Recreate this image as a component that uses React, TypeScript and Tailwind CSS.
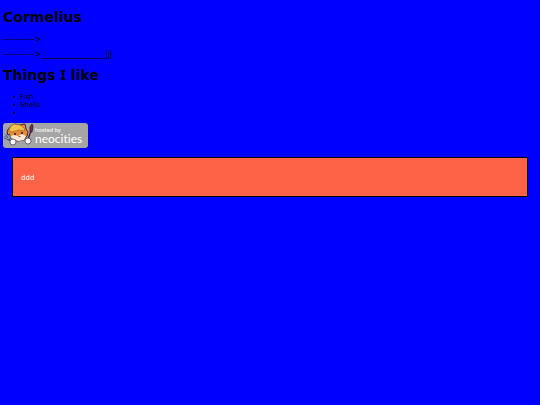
import React from 'react';

const LIKES = ['Fish', 'Shells', ''];

const NeocitiesCat: React.FC = () => (
  <svg viewBox="0 0 32 25" className="h-[25px] w-8 shrink-0" aria-hidden="true">
    {/* head */}
    <path d="M7 4l5-3 5 1 5-1 1 5 2 3-1 4-3 4-6 1-6-1-4-4-1-5z" fill="#e58a35" stroke="#4a2a30" strokeWidth="1" />
    <path d="M6 8l1-4 4-3 6 1 4 3 1 3-6-1-7 2z" fill="#f2c24e" stroke="#a56a27" strokeWidth="0.7" />
    <path d="M7 13l4-1 4 1 4-2 4 2-2 4-5 1-5-1z" fill="#f8e8d6" />
    <path d="M12 10v2M19 9v2" stroke="#281c34" strokeWidth="1.6" />
    <path d="M15 13h3l-1 1h-1z" fill="#b14548" />
    {/* fork */}
    <path d="M3 11l6 7M1 14l6 3M6 11l1 5" stroke="#3a4566" strokeWidth="2" fill="none" />
    <path d="M3 11l6 7M1 14l5 2M6 12v3" stroke="#b4c4e0" strokeWidth="0.9" fill="none" />
    {/* brush */}
    <path d="M28 8l-3 8" stroke="#4a1d2d" strokeWidth="1.4" />
    <path d="M29 1l1 2-1 6h-2v-5z" fill="#8e2438" stroke="#2b1d35" strokeWidth="0.8" />
    {/* paws */}
    <circle cx="10" cy="19" r="3" fill="#fff" stroke="#4c4763" strokeWidth="0.8" />
    <circle cx="25" cy="18" r="3" fill="#fff" stroke="#4c4763" strokeWidth="0.8" />
  </svg>
);

const App: React.FC = () => {
  return (
    <main className="min-h-screen bg-[#0000ff] px-[3px] pt-[9px] font-['DejaVu_Sans',sans-serif] text-[7px] leading-[8px] text-black">
      <h1 className="text-[14px] font-bold leading-4">Cormelius</h1>
      <p className="mt-[11px] text-[8px]">-----------&gt;</p>
      <p className="mt-[7px] text-[8px]">-----------&gt;________________jjj</p>

      <h2 className="mt-2 text-[14px] font-bold leading-4">
        Things <span className="font-['Noto_Sans',sans-serif]">I</span> like
      </h2>
      <ul className="mt-[10px] pl-[10px]">
        {LIKES.map((like, i) => (
          <li key={i} className="flex h-2 items-center gap-[5px]">
            <span className="h-[2px] w-[2px] rounded-full bg-black" />
            {like}
          </li>
        ))}
      </ul>

      <a
        href="https://neocities.org"
        aria-label="Hosted by Neocities"
        className="mt-[6px] flex h-[25px] w-[85px] rounded-[3px] bg-[#a5a5a5] text-white"
      >
        <NeocitiesCat />
        <span className="flex flex-col pt-1 font-['Lato',sans-serif] [font-variant-ligatures:none]">
          <span className="text-[6px] leading-[6px]">hosted by</span>
          <span className="text-[12px] leading-[12px]">neocities</span>
        </span>
      </a>

      <div className="mx-[9px] mt-[9px] border border-black bg-[#ff6347] px-2 pb-[14px] pt-4 text-white">
        <p>ddd</p>
      </div>
    </main>
  );
};

export default App;
